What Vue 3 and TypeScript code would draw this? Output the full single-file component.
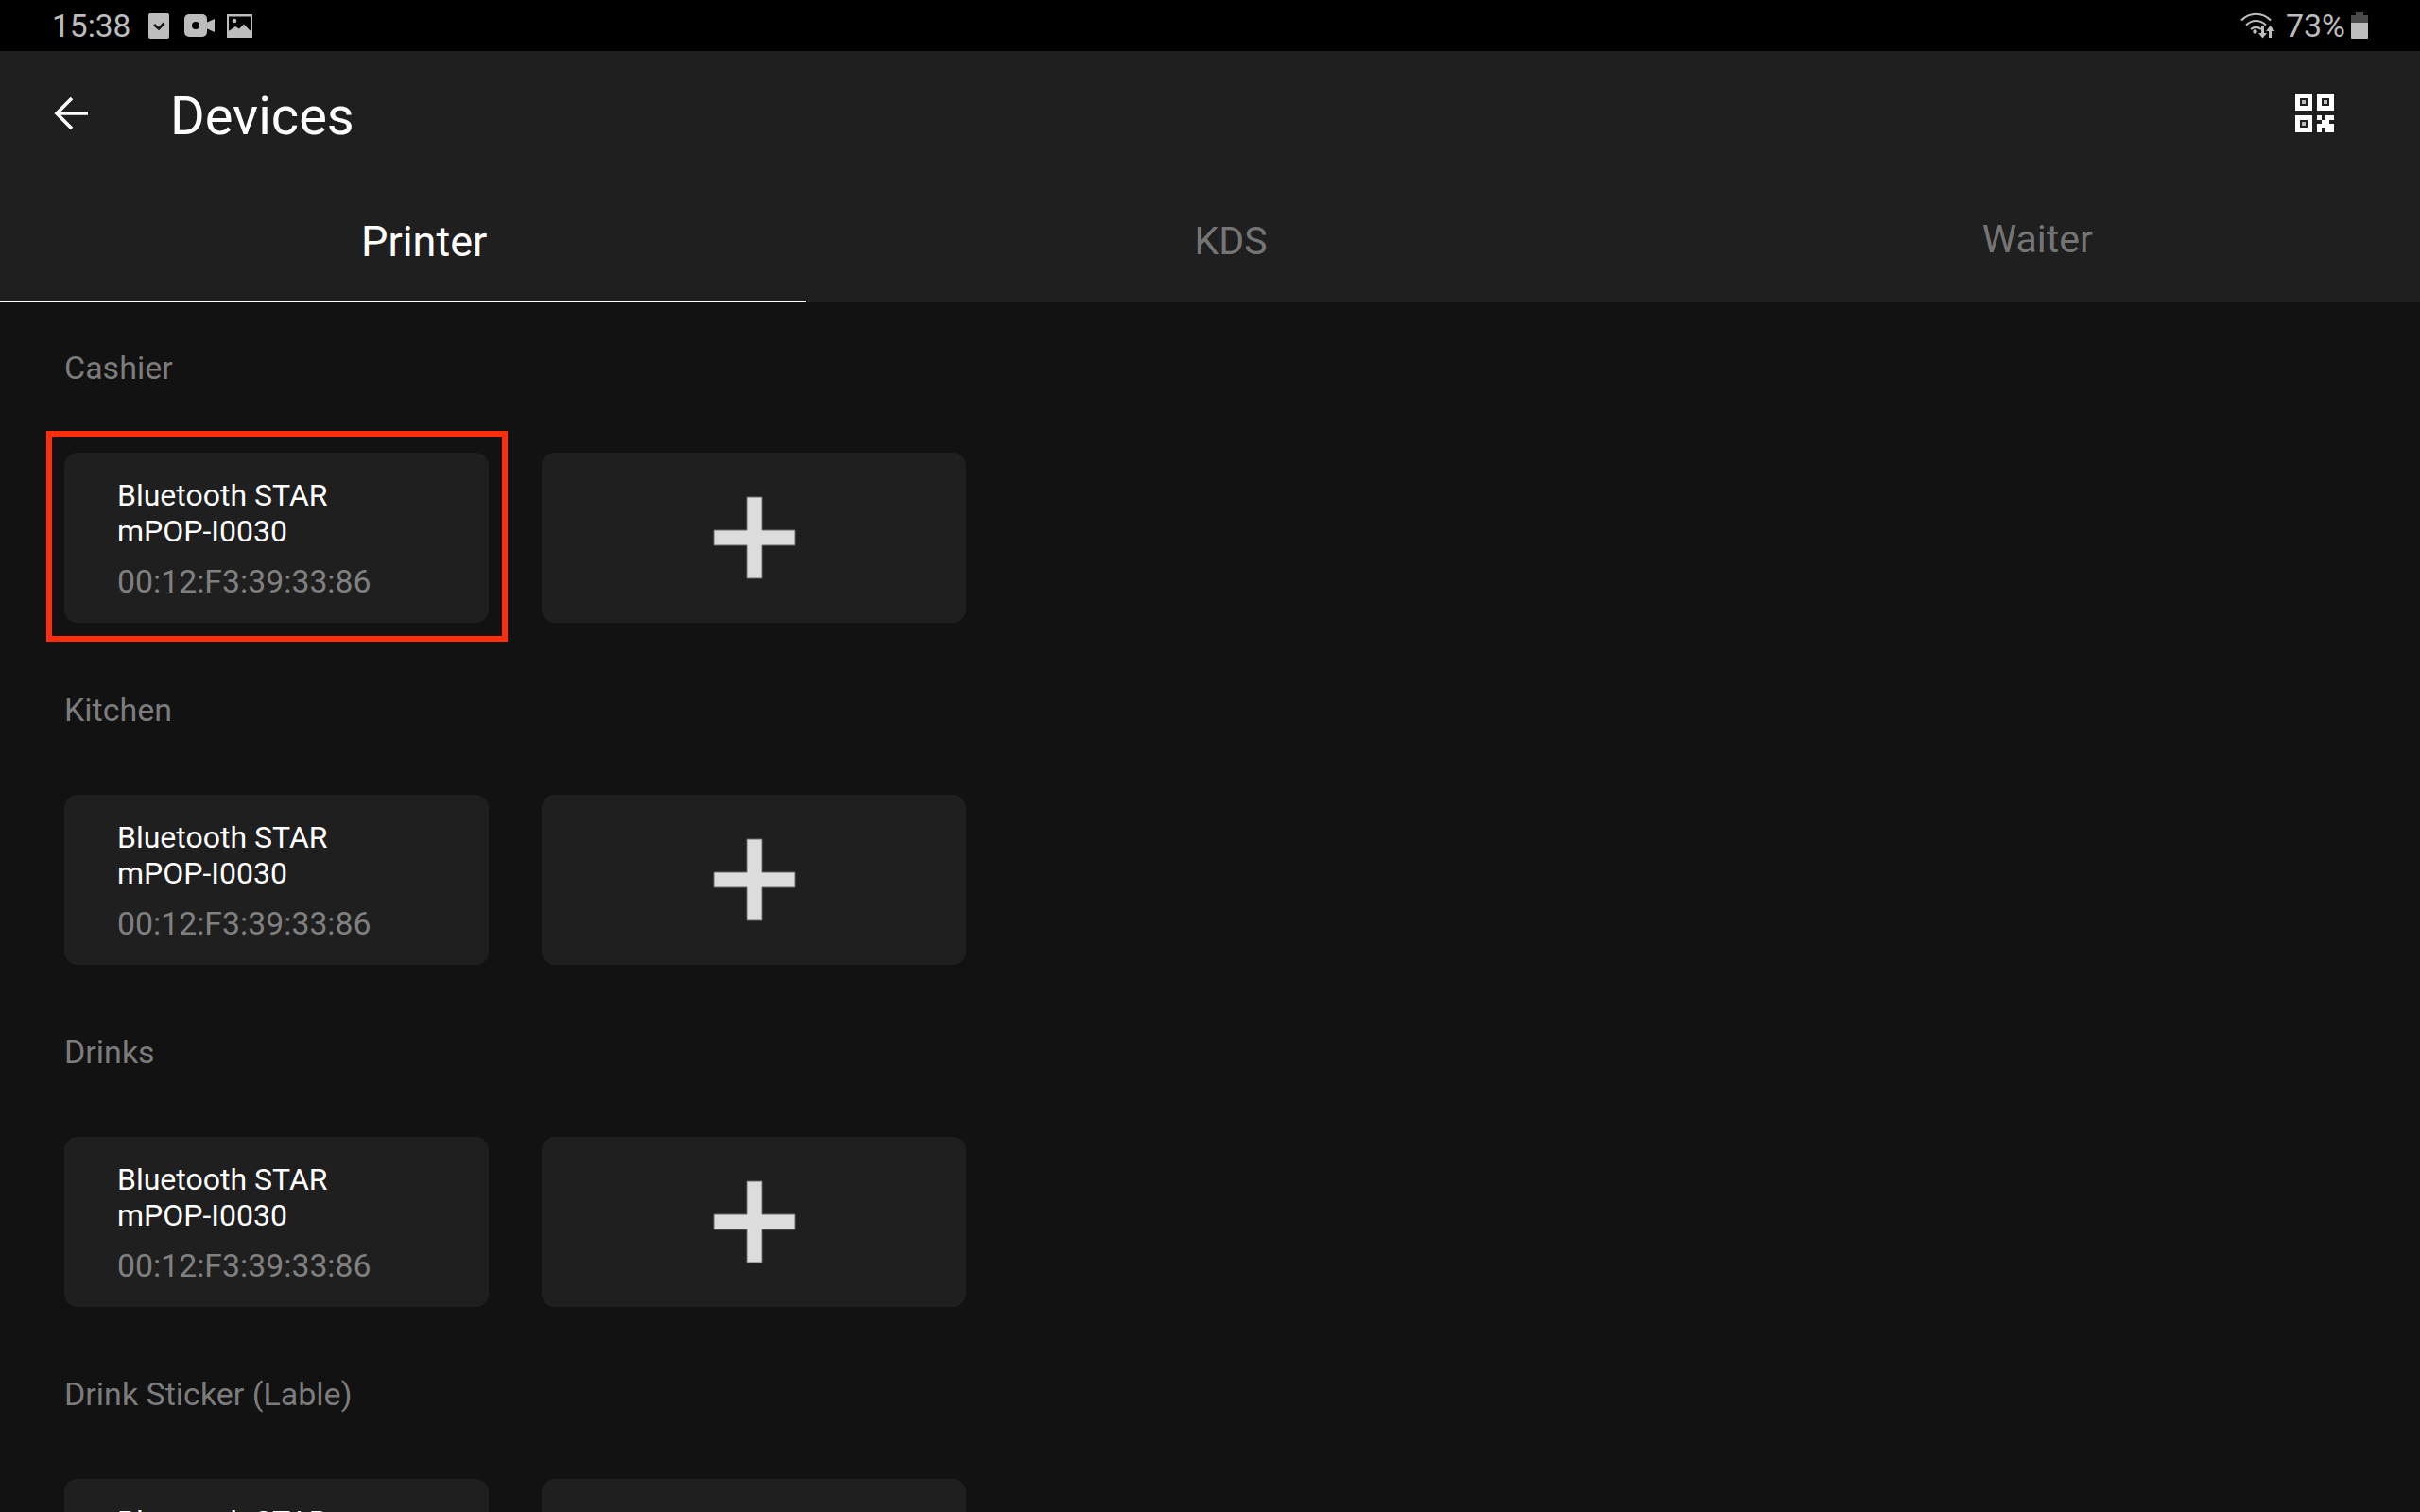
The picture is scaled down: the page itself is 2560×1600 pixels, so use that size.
<template>
  <div class="screen">
    <div class="status-bar">
      <div class="status-left">
        <span class="time">15:38</span>
        <svg class="ic-check" viewBox="0 0 22 27">
          <rect x="0" y="0" width="22" height="27" rx="2" fill="#bdbdbd" />
          <path d="M6 12l5 4.500 5.500-6" fill="none" stroke="#111" stroke-width="2.600" />
        </svg>
        <svg class="ic-video" viewBox="0 0 32 24">
          <rect x="0" y="0" width="24" height="24" rx="5" fill="#bdbdbd" />
          <path d="M23 9l9-4v14l-9-4z" fill="#bdbdbd" />
          <circle cx="12" cy="12" r="4" fill="#000" />
        </svg>
        <svg class="ic-image" viewBox="0 0 27 25">
          <rect x="0" y="0" width="27" height="25" fill="#bdbdbd" />
          <rect x="2" y="2.500" width="23" height="15" fill="#000" />
          <circle cx="8" cy="7" r="2.300" fill="#bdbdbd" />
          <path d="M2 18l7-5 4 2.500 5-5 7 7.500z" fill="#bdbdbd" />
        </svg>
      </div>
      <div class="status-right">
        <svg class="ic-wifi" viewBox="0 0 37 28">
          <g fill="none" stroke="#bdbdbd" stroke-width="2.200">
            <path d="M1 8.500C10-.5 23-.5 32 8.500" />
            <path d="M6 13.500c6.500-6 14.500-6 21 0" />
            <path d="M11 18c3.800-3 7.200-3 11 0" />
          </g>
          <circle cx="15.500" cy="20.500" r="2.200" fill="#bdbdbd" />
          <path d="M22 15h3v7h3l-4.500 5.500L19 22h3z" fill="#bdbdbd" />
          <path d="M30 27h3v-7h3.500L31.500 14 27 20h3z" fill="#bdbdbd" />
        </svg>
        <span class="battery-text">73%</span>
        <svg class="ic-battery" viewBox="0 0 18 28">
          <path d="M5 0h8v3h5v8H0V3h5z" fill="#4a4a4a" />
          <path d="M0 11h18v16a1 1 0 0 1-1 1H1a1 1 0 0 1-1-1z" fill="#bdbdbd" />
        </svg>
      </div>
    </div>

    <header class="app-bar">
      <div class="toolbar">
        <svg class="ic-back" viewBox="0 0 37 36">
          <path d="M36 18H3M19 2L3 18l16 16" fill="none" stroke="#fff" stroke-width="3.600" />
        </svg>
        <h1 class="title">Devices</h1>
        <svg class="ic-qr" viewBox="0 0 41 41">
          <g fill="#fff">
            <path fill-rule="evenodd" d="M0 0h18v18H0zM5 5v8h8V5z" />
            <path fill-rule="evenodd" d="M23 0h18v18H23zM28 5v8h8V5z" />
            <path fill-rule="evenodd" d="M0 23h18v18H0zM5 28v8h8v-8z" />
            <rect x="7" y="7" width="4" height="4" fill="#bbb" />
            <rect x="30" y="7" width="4" height="4" fill="#bbb" />
            <rect x="7" y="30" width="4" height="4" fill="#bbb" />
            <path d="M23 23h5v5h4v-5h9v5h-5v4h5v9h-9v-5h-4v5h-5v-9h5v-4h-5z" />
          </g>
        </svg>
      </div>
      <nav class="tabs">
        <div
          v-for="tab in tabs"
          :key="tab"
          class="tab"
          :class="{ active: tab === activeTab, waiter: tab === 'Waiter' }"
        >
          {{ tab }}
        </div>
      </nav>
    </header>

    <main class="content">
      <section v-for="(group, index) in groups" :key="group" class="group">
        <div class="group-label">{{ group }}</div>
        <div class="cards">
          <div class="card device">
            <div class="device-name">Bluetooth STAR<br />mPOP-I0030</div>
            <div class="device-mac">00:12:F3:39:33:86</div>
            <div v-if="index === 0" class="highlight"></div>
          </div>
          <div class="card add">
            <svg class="ic-plus" viewBox="0 0 86 86">
              <path d="M35 0h16v35h35v16H51v35H35V51H0V35h35z" fill="#dcdcdc" stroke="#6a6a6a" stroke-width="1" />
            </svg>
          </div>
        </div>
      </section>
    </main>
  </div>
</template>

<script setup lang="ts">
const tabs: string[] = ['Printer', 'KDS', 'Waiter'];
const activeTab = 'Printer';
const groups: string[] = ['Cashier', 'Kitchen', 'Drinks', 'Drink Sticker (Lable)'];
</script>

<style>
html,
body {
  margin: 0;
  background: #121212;
}
</style>

<style scoped>
.screen {
  width: 2560px;
  height: 1600px;
  overflow: hidden;
  display: flex;
  flex-direction: column;
  background: #121212;
  font-family: Roboto, "Liberation Sans", sans-serif;
  color: #fff;
}

.status-bar {
  height: 54px;
  flex: none;
  background: #000;
  display: flex;
  justify-content: space-between;
  align-items: center;
  padding: 0 55px 0 55px;
  color: #bdbdbd;
  font-size: 34px;
}

.status-left,
.status-right {
  display: flex;
  align-items: center;
}

.time {
  font-size: 33.500px;
  margin-right: 19px;
}

.ic-check {
  width: 22px;
  height: 27px;
  margin-right: 16px;
}

.ic-video {
  width: 32px;
  height: 24px;
  margin-right: 13px;
}

.ic-image {
  width: 27px;
  height: 25px;
}

.ic-wifi {
  width: 37px;
  height: 28px;
  margin-right: 11px;
}

.ic-battery {
  width: 18px;
  height: 28px;
  margin-left: 6px;
}

.app-bar {
  flex: none;
  height: 266px;
  background: #1f1f1f;
  display: flex;
  flex-direction: column;
}

.toolbar {
  height: 136px;
  display: flex;
  align-items: center;
  padding: 0 91px 0 57px;
}

.ic-back {
  width: 37px;
  height: 36px;
  margin-right: 86px;
  margin-bottom: 4px;
}

.title {
  margin: 0;
  flex: 1;
  font-size: 56px;
  font-weight: 400;
  padding-top: 2px;
}

.ic-qr {
  width: 41px;
  height: 41px;
  margin-bottom: 6px;
}

.tabs {
  flex: 1;
  display: grid;
  grid-template-columns: repeat(3, 1fr);
}

.tab {
  display: flex;
  align-items: center;
  justify-content: center;
  font-size: 41px;
  color: #757575;
  box-sizing: border-box;
  padding-left: 44px;
}

.tab.active {
  font-size: 45px;
  color: #fff;
  border-bottom: 2px solid #fff;
  padding-top: 2px;
}

.tab.waiter {
  padding-bottom: 4px;
}

.content {
  flex: 1;
  padding: 0 68px;
}

.group {
  padding-top: 48px;
  height: 314px;
}

.group-label {
  font-size: 34px;
  line-height: 42px;
  color: #7c7c7c;
  margin-bottom: 69px;
}

.cards {
  display: flex;
  gap: 56px;
}

.card {
  width: 449px;
  height: 180px;
  box-sizing: border-box;
  background: #1f1f1f;
  border-radius: 14px;
  position: relative;
}

.device {
  padding: 26px 0 0 56px;
}

.device-name {
  font-size: 32px;
  line-height: 38px;
  color: #fff;
}

.device-mac {
  font-size: 33.800px;
  line-height: 40px;
  margin-top: 15px;
  color: #808080;
}

.highlight {
  position: absolute;
  top: -23px;
  left: -19px;
  right: -20px;
  bottom: -20px;
  border: 6px solid #ff2d0a;
}

.add {
  display: flex;
  align-items: center;
  justify-content: center;
}

.ic-plus {
  width: 86px;
  height: 86px;
  overflow: visible;
}
</style>
